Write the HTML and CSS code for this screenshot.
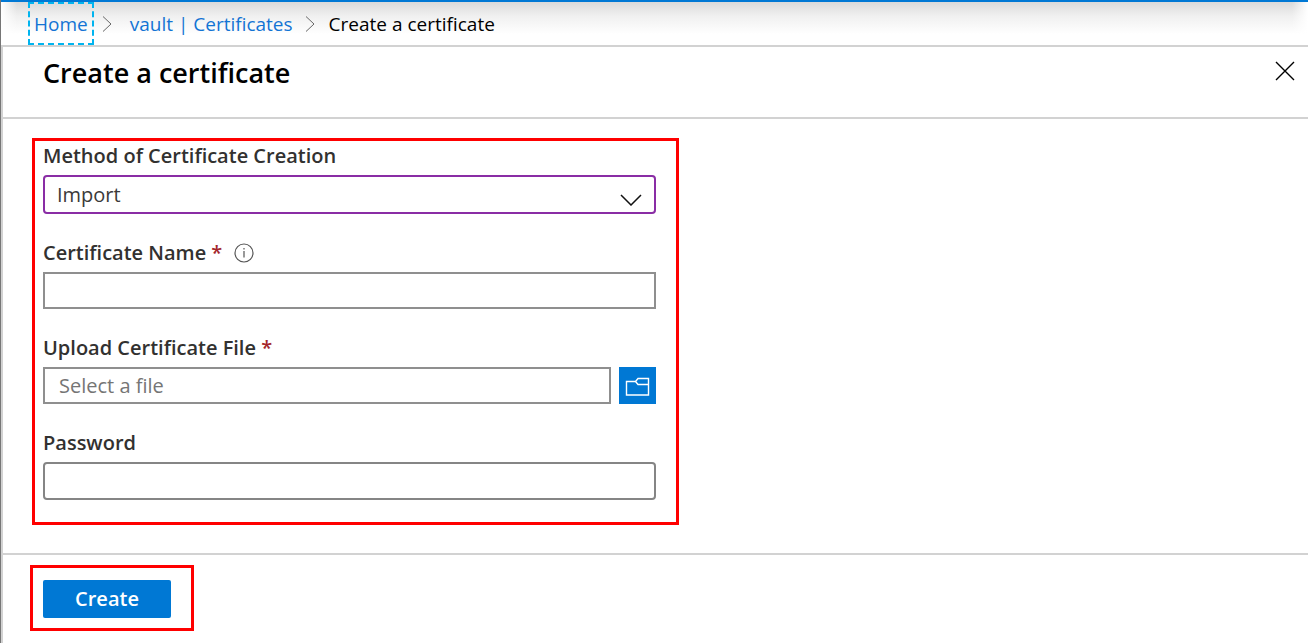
FILE: index.html
```html
<!DOCTYPE html>
<html lang="en">
<head>
<meta charset="utf-8">
<meta name="viewport" content="width=device-width, initial-scale=1">
<title>Create a certificate</title>
<link rel="stylesheet" href="styles.css">
</head>
<body>
<div class="page">
  <nav class="breadcrumb" aria-label="Breadcrumb">
    <a class="crumb crumb-focused" href="#home">Home</a>
    <svg class="separator" viewBox="0 0 10 16" aria-hidden="true"><path d="M1 0.500l8 7.500-8 7.500"/></svg>
    <a class="crumb" href="#certificates">vault | Certificates</a>
    <svg class="separator" viewBox="0 0 10 16" aria-hidden="true"><path d="M1 0.500l8 7.500-8 7.500"/></svg>
    <span class="crumb crumb-current" aria-current="page">Create a certificate</span>
  </nav>
  <main class="blade">
    <header class="blade-header">
      <h1 class="title">Create a certificate</h1>
      <button class="close" type="button" aria-label="Close">
        <svg viewBox="0 0 20 20" aria-hidden="true"><path d="M1 1l18 18M19 1L1 19"/></svg>
      </button>
    </header>
    <form class="form" id="certificate-form">
      <div class="highlight fields">
        <div class="field">
          <label class="label" for="method">Method of Certificate Creation</label>
          <div class="select-wrap">
            <select class="control select" id="method"><option>Import</option><option>Generate</option></select>
            <svg class="select-arrow" viewBox="0 0 22 12" aria-hidden="true"><path d="M1 1l10 10L21 1"/></svg>
          </div>
        </div>
        <div class="field">
          <div class="label-row">
            <label class="label" for="name">Certificate Name <span class="required">*</span></label>
            <svg class="info" viewBox="0 0 20 20" aria-hidden="true"><circle cx="10" cy="10" r="9"/><path d="M10 8v6.500M10 5v1.500"/></svg>
          </div>
          <input class="control" id="name" type="text" required>
        </div>
        <div class="field">
          <label class="label" for="file">Upload Certificate File <span class="required">*</span></label>
          <div class="file-row">
            <input class="control" id="file" type="text" placeholder="Select a file" required>
            <button class="browse" type="button" aria-label="Browse">
              <svg viewBox="0 0 25 20" aria-hidden="true"><path d="M10.500 4.500H1.500V18H23.500V1.500H13L10.500 4.500L13 7.500H23.500"/></svg>
            </button>
          </div>
        </div>
        <div class="field">
          <label class="label" for="password">Password</label>
          <input class="control rounded" id="password" type="password">
        </div>
      </div>
    </form>
    <footer class="footer">
      <div class="highlight action">
        <button class="create" type="submit" form="certificate-form">Create</button>
      </div>
    </footer>
  </main>
</div>
</body>
</html>
```
FILE: styles.css
```css
* {
  box-sizing: border-box;
}

body {
  margin: 0;
  background: #fff;
  color: #323130;
  font: 20px/30px "Segoe UI", "Open Sans", "Noto Sans", sans-serif;
}

.page {
  display: flex;
  flex-direction: column;
  min-height: 100vh;
  border-left: 1px solid #767676;
}

.breadcrumb {
  display: flex;
  align-items: center;
  height: 47px;
  padding-left: 27px;
  border-top: 2px solid #0078d4;
  border-bottom: 2px solid #d2d2d2;
  background:
    linear-gradient(to right, #fff, transparent 16px, transparent calc(100% - 16px), #fff),
    linear-gradient(#dadada, #f0f0f0 14px, #fff 32px);
}

.crumb {
  color: #1374d4;
  font-size: 19px;
  white-space: nowrap;
  text-decoration: none;
}

.crumb-focused {
  align-self: stretch;
  padding: 6px 4px;
  border: 2px dashed #00b4ef;
  line-height: 28px;
}

.crumb-current {
  color: #000;
}

.separator {
  flex: none;
  width: 10px;
  height: 16px;
  margin: 0 14px 0 12px;
  fill: none;
  stroke: #666;
}

.crumb-focused + .separator {
  margin: 0 18px 0 8px;
}

.blade {
  display: flex;
  flex: 1;
  flex-direction: column;
  border-left: 2px solid #d2d2d2;
}

.blade-header {
  display: flex;
  align-items: flex-start;
  justify-content: space-between;
  height: 72px;
  padding: 8px 8px 0 40px;
  border-bottom: 2px solid #d2d2d2;
}

.title {
  margin: 0;
  color: #000;
  font-size: 27px;
  font-weight: 600;
  line-height: 36px;
}

.close {
  display: flex;
  padding: 6px 5px;
  border: 0;
  background: none;
}

.close svg {
  width: 20px;
  height: 20px;
  fill: none;
  stroke: #000;
  stroke-width: 1.4;
}

.form {
  flex: 1;
  padding: 19px 29px 28px;
}

.highlight {
  border: 3px solid #f00;
}

.fields {
  display: flex;
  flex-direction: column;
  gap: 24px;
  max-width: 647px;
  padding: 0 20px 22px 8px;
}

.field {
  display: flex;
  flex-direction: column;
  gap: 4px;
}

.label {
  font-weight: 600;
}

.required {
  color: #a4262c;
}

.label-row {
  display: flex;
  align-items: center;
  gap: 12px;
}

.info {
  width: 20px;
  height: 20px;
  fill: none;
  stroke: #555;
  stroke-width: 1.2;
}

.control {
  width: 100%;
  min-width: 0;
  height: 37px;
  padding: 0 14px;
  border: 2px solid #8f8f8f;
  border-radius: 0;
  background: #fff;
  color: #3b3a39;
  font: inherit;
}

.control::placeholder {
  color: #757575;
  opacity: 1;
}

.rounded {
  height: 38px;
  border-color: #858585;
  border-radius: 4px;
}

.select-wrap {
  display: grid;
  align-items: center;
}

.select-wrap > * {
  grid-area: 1 / 1;
}

.select {
  height: 39px;
  padding: 0 12px;
  border-color: #8a2da5;
  border-radius: 4px;
  appearance: none;
}

.select-arrow {
  justify-self: end;
  width: 22px;
  height: 12px;
  margin: 10px 14px 0 0;
  fill: none;
  stroke: #111;
  stroke-width: 1.5;
  pointer-events: none;
}

.file-row {
  display: flex;
  gap: 8px;
}

.browse {
  display: flex;
  flex: none;
  align-items: center;
  justify-content: center;
  width: 37px;
  height: 37px;
  padding: 2px 1px 0 0;
  border: 0;
  background: #0078d4;
}

.browse svg {
  width: 25px;
  height: 20px;
  fill: none;
  stroke: #fff;
  stroke-width: 1.4;
}

.footer {
  padding: 10px 27px 12px;
  border-top: 2px solid #d2d2d2;
}

.action {
  width: fit-content;
  padding: 12px 20px 10px 10px;
}

.create {
  display: block;
  width: 128px;
  height: 38px;
  padding: 0;
  border: 0;
  border-radius: 2px;
  background: #0078d4;
  color: #fff;
  font: inherit;
  font-weight: 600;
}
```
